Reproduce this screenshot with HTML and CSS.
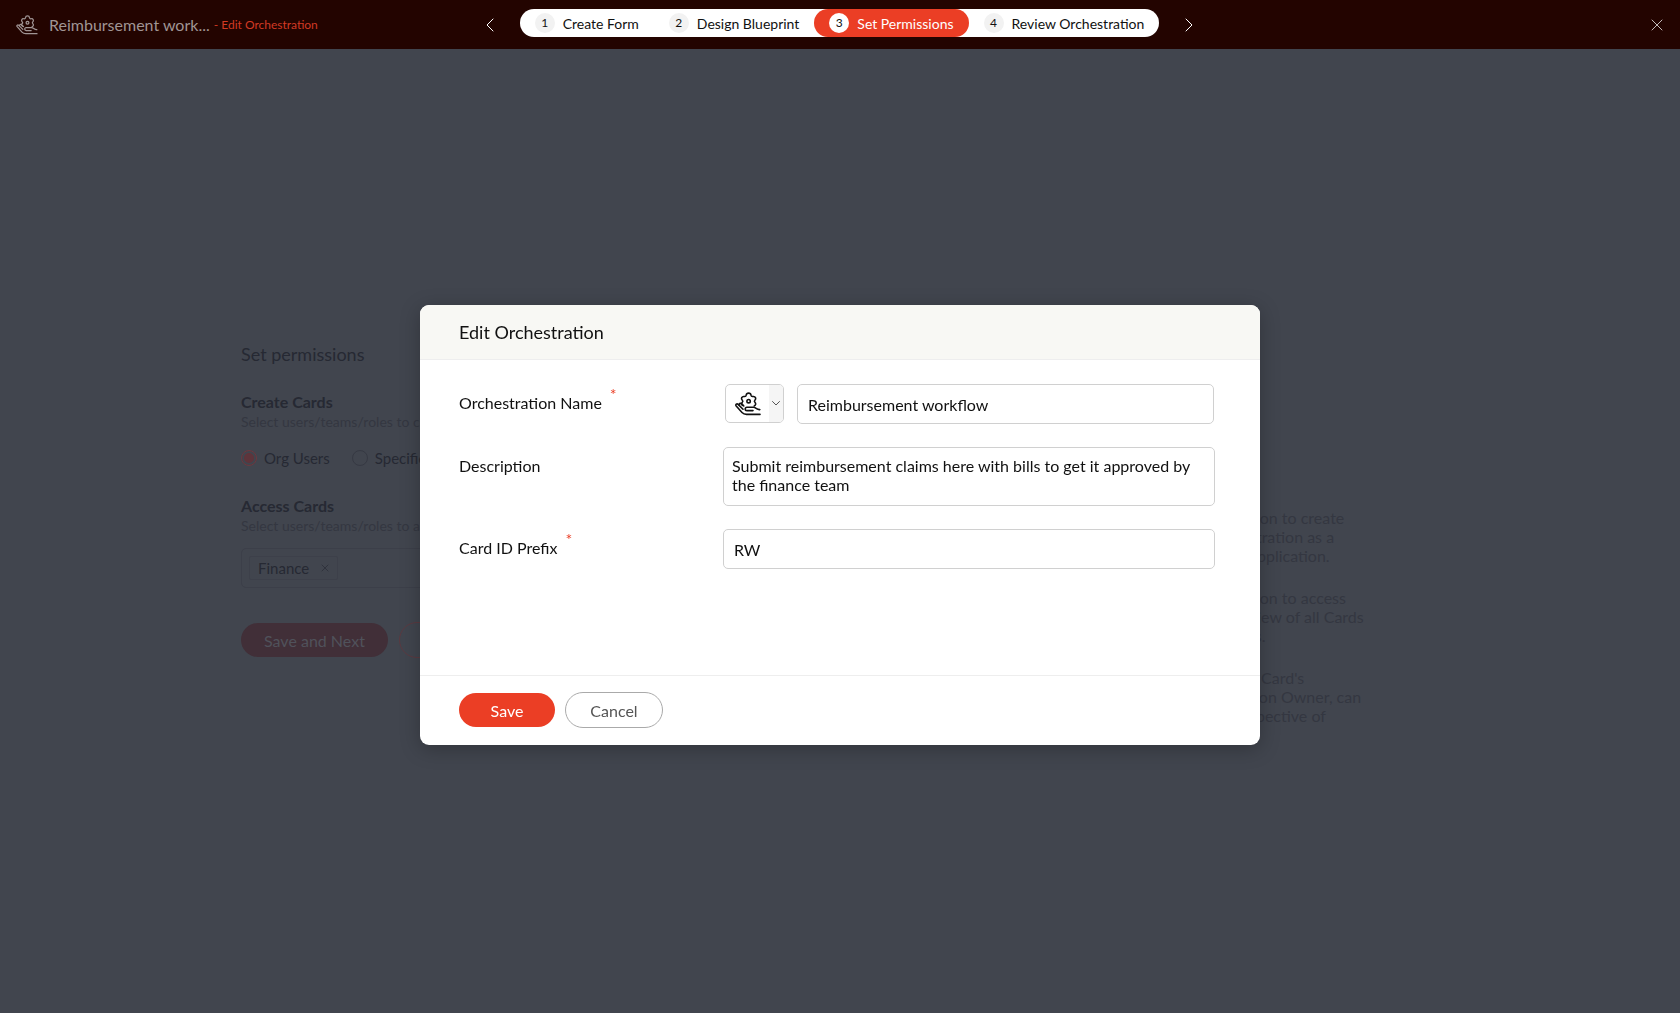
FILE: index.html
```html
<!DOCTYPE html>
<html lang="en">

<head>
    <meta charset="UTF-8">
    <meta name="viewport" content="width=device-width, initial-scale=1.0">
    <title>Edit Orchestration</title>
    <link rel="stylesheet" href="styles.css">
</head>

<body>

    <!-- shared icon -->
    <svg class="sprite" aria-hidden="true">
        <symbol id="hand-gear" viewBox="0 0 26 24">
            <path d="M8 13.5C6.4 12.8 6 11.4 7.3 10.3C8 9.6 8 9 7.3 8.3C5.6 6.6 6.8 4.2 9.2 4.5C10.3 4.7 11 4.3 11.2 3.2C11.6 0.4 15.6 0.4 16 3.2C16.2 4.3 16.9 4.7 18 4.5C20.4 4.2 21.6 6.6 19.9 8.3C19.2 9 19.2 9.6 19.9 10.3C21.2 11.6 20.8 13.4 19.2 14" />
            <circle cx="13.6" cy="9.2" r="1.7" />
            <path d="M25 22.4H11.5C9.5 22.4 8.3 21.9 7 20.5L1.2 14C0.2 12.6 1.9 11.2 3.1 12.4L8 17.2" />
            <path d="M4 12.7C4.4 11.1 6 11 7 12.1L8.8 14" />
            <path d="M18 18.6H12C9.6 18.6 9.6 15.2 12 15.2H18.5C21 15.2 21.5 17.8 24.8 17.6" />
        </symbol>
    </svg>

    <header class="topbar">
        <div class="topbar-title">
            <svg class="icon"><use href="#hand-gear" /></svg>
            <h1>Reimbursement work...</h1>
            <a href="#edit">- Edit Orchestration</a>
        </div>

        <nav class="steps-nav">
            <button class="arrow" aria-label="Previous step">
                <svg width="8" height="14" viewBox="0 0 8 14"><path d="M7 1L1 7l6 6" /></svg>
            </button>
            <ol class="steps">
                <li><a href="#form"><span class="num">1</span>Create Form</a></li>
                <li><a href="#blueprint"><span class="num">2</span>Design Blueprint</a></li>
                <li><a href="#permissions" class="active"><span class="num">3</span>Set Permissions</a></li>
                <li><a href="#review"><span class="num">4</span>Review Orchestration</a></li>
            </ol>
            <button class="arrow" aria-label="Next step">
                <svg width="8" height="14" viewBox="0 0 8 14"><path d="M1 1l6 6-6 6" /></svg>
            </button>
        </nav>

        <button class="close" aria-label="Close">
            <svg width="12" height="12" viewBox="0 0 12 12"><path d="M1 1l10 10M11 1L1 11" /></svg>
        </button>
    </header>

    <main class="page">
        <form class="permissions">
            <h2>Set permissions</h2>

            <h3>Create Cards</h3>
            <p>Select users/teams/roles to create cards</p>
            <div class="radios">
                <label><input type="radio" name="create" checked>Org Users</label>
                <label><input type="radio" name="create">Specific</label>
            </div>

            <h3>Access Cards</h3>
            <p>Select users/teams/roles to access cards</p>
            <div class="tags">
                <span class="tag">Finance
                    <button type="button" aria-label="Remove Finance">
                        <svg width="8" height="8" viewBox="0 0 8 8"><path d="M1 1l6 6M7 1L1 7" /></svg>
                    </button>
                </span>
            </div>

            <div class="page-actions">
                <button type="button" class="next">Save and Next</button>
                <button type="button" class="back">Back</button>
            </div>
        </form>

        <aside class="help">
            <p>sion to create<br>stration as a<br>application.</p>
            <p>sion to access<br>view of all Cards<br>rs.</p>
            <p>a Card's<br>tion Owner, can<br>spective of</p>
        </aside>
    </main>

    <div class="overlay">
        <form class="modal" role="dialog" aria-labelledby="modal-title">
            <h2 class="modal-header" id="modal-title">Edit Orchestration</h2>

            <div class="modal-body">
                <div class="field">
                    <label for="name">Orchestration Name<span class="required">*</span></label>
                    <div class="name-row">
                        <button type="button" class="icon-picker" aria-label="Choose icon">
                            <span class="picked"><svg class="icon"><use href="#hand-gear" /></svg></span>
                            <span class="caret"><svg width="8" height="5" viewBox="0 0 8 5"><path d="M0.5 0.5L4 4l3.5-3.5" /></svg></span>
                        </button>
                        <input type="text" id="name" value="Reimbursement workflow">
                    </div>
                </div>

                <div class="field">
                    <label for="description">Description</label>
                    <textarea id="description">Submit reimbursement claims here with bills to get it approved by the finance team</textarea>
                </div>

                <div class="field">
                    <label for="prefix">Card ID Prefix<span class="required">*</span></label>
                    <input type="text" id="prefix" value="RW">
                </div>
            </div>

            <div class="modal-footer">
                <button type="button" class="save">Save</button>
                <button type="button" class="cancel">Cancel</button>
            </div>
        </form>
    </div>

</body>

</html>
```

FILE: styles.css
```css
* {
    box-sizing: border-box;
}

body {
    margin: 0;
    min-height: 100vh;
    font-family: Lato, sans-serif;
    font-size: 16px;
    background-color: #41454e;
    color: #111;
}

h1, h2, h3, p, ol {
    margin: 0;
    padding: 0;
    font-weight: normal;
}

a {
    text-decoration: none;
}

button, input, textarea {
    font: inherit;
    color: inherit;
}

button {
    padding: 0;
    border: none;
    background: none;
}

svg {
    fill: none;
    stroke: currentColor;
    stroke-linecap: round;
    stroke-linejoin: round;
}

.sprite {
    display: none;
}

/* top bar */

.topbar {
    display: grid;
    grid-template-columns: 1fr auto 1fr;
    align-items: center;
    height: 49px;
    padding: 0 17px 0 16px;
    background-color: #230400;
}

.topbar-title {
    display: flex;
    align-items: center;
    color: #a09594;
}

.topbar-title .icon {
    width: 22px;
    height: 20px;
    stroke-width: 1.5;
}

.topbar-title h1 {
    margin: 0 4px 0 11px;
    font-size: 16px;
}

.topbar-title a {
    font-size: 12px;
    color: #d13a24;
}

.steps-nav {
    display: flex;
    align-items: center;
    gap: 26px;
}

.arrow {
    display: flex;
    color: #fff;
}

.steps {
    display: flex;
    margin-bottom: 3px;
    list-style: none;
    border-radius: 14px;
    background-color: #fff;
}

.steps a {
    display: flex;
    align-items: center;
    gap: 8px;
    height: 28px;
    padding: 0 15px;
    border-radius: 14px;
    font-size: 14px;
    color: #111;
}

.steps .num {
    width: 20px;
    line-height: 20px;
    border-radius: 50%;
    text-align: center;
    font-size: 12px;
    background-color: #f2f2f2;
}

.steps .active {
    background-color: #eb3e25;
    color: #fff;
}

.steps .active .num {
    background-color: #fff;
    color: #111;
}

.close {
    display: flex;
    justify-self: end;
    color: #c4bcbb;
}

/* page behind the modal */

.page {
    display: flex;
    justify-content: space-between;
    max-width: 1198px;
    margin: 0 auto;
    padding-top: 293px;
    color: #262933;
}

.permissions {
    width: 600px;
}

.permissions h2 {
    margin-bottom: 26px;
    font-size: 18px;
    line-height: 24px;
}

.permissions h3 {
    font-size: 16px;
    font-weight: bold;
    line-height: 20px;
}

.permissions p {
    font-size: 14px;
    line-height: 20px;
    color: #343741;
}

.radios {
    display: flex;
    gap: 22px;
    margin: 16px 0 28px;
}

.radios label {
    display: flex;
    align-items: center;
    gap: 7px;
    font-size: 15px;
    line-height: 20px;
}

.radios input {
    appearance: none;
    width: 16px;
    height: 16px;
    margin: 0;
    border: 1px solid #363943;
    border-radius: 50%;
}

.radios input:checked {
    border-color: #6a3a41;
    background-color: #5e343b;
    box-shadow: inset 0 0 0 2px #41454e;
}

.tags {
    margin: 12px 0 34px;
    padding: 7px;
    border: 1px solid #3c3f49;
    border-radius: 5px;
}

.tag {
    display: inline-flex;
    align-items: center;
    gap: 12px;
    height: 24px;
    padding: 0 8px;
    border: 1px solid #3d404a;
    border-radius: 2px;
    font-size: 15px;
}

.tag button {
    display: flex;
    color: #30333d;
}

.page-actions {
    display: flex;
    align-items: center;
    gap: 11px;
}

.page-actions button {
    height: 34px;
    padding: 0 23px;
    border-radius: 17px;
}

.page-actions .next {
    background-color: #412f38;
    color: #50525b;
}

.page-actions .back {
    height: 36px;
    border: 1px solid #5b3a41;
    border-radius: 18px;
}

.help {
    width: 190px;
    padding-top: 166px;
    color: #343741;
    line-height: 19px;
}

.help p {
    margin-bottom: 23px;
}

/* modal */

.overlay {
    position: fixed;
    inset: 0;
    display: flex;
    align-items: center;
    justify-content: center;
    padding-top: 37px;
    pointer-events: none;
}

.modal {
    width: 50%;
    min-width: 700px;
    border-radius: 9px;
    overflow: hidden;
    background-color: #fff;
    box-shadow: 0 4px 20px rgba(0, 0, 0, 0.25);
    pointer-events: auto;
}

.modal-header {
    padding: 16px 39px 15px;
    border-bottom: 1px solid #eee;
    font-size: 18px;
    line-height: 23px;
    background-color: #f8f8f4;
}

.modal-body {
    display: flex;
    flex-direction: column;
    gap: 23px;
    min-height: 315px;
    padding: 24px 45px 24px 39px;
}

.field {
    display: grid;
    grid-template-columns: 264px 1fr;
    align-items: start;
}

.field label {
    display: flex;
    gap: 8px;
    line-height: 38px;
}

.required {
    line-height: 20px;
    font-size: 16px;
    color: #eb3e25;
}

.field input,
.field textarea {
    width: 100%;
    height: 40px;
    padding: 0 10px;
    border: 1px solid #d0d0d0;
    border-radius: 5px;
    outline: none;
    background-color: #fff;
}

.field textarea {
    display: block;
    height: 59px;
    padding: 8px;
    line-height: 19px;
    resize: none;
}

.name-row {
    display: flex;
    align-items: flex-start;
    gap: 13px;
    padding: 0 1px 0 2px;
}

.icon-picker {
    display: flex;
    flex: none;
    width: 59px;
    height: 39px;
    border: 1px solid #d0d0d0;
    border-radius: 5px;
    overflow: hidden;
}

.picked,
.caret {
    display: flex;
    align-items: center;
    justify-content: center;
    height: 100%;
}

.picked {
    flex: 1;
}

.picked .icon {
    width: 26px;
    height: 24px;
    stroke-width: 1.6;
}

.caret {
    width: 14px;
    background-color: #f5f5f5;
    color: #555;
}

.modal-footer {
    display: flex;
    align-items: center;
    gap: 10px;
    padding: 16px 39px 17px;
    border-top: 1px solid #eee;
}

.save {
    width: 96px;
    height: 34px;
    border-radius: 17px;
    background-color: #eb3e25;
    color: #fff;
}

.cancel {
    width: 98px;
    height: 36px;
    border: 1px solid #aaa;
    border-radius: 18px;
    color: #555;
}
```
